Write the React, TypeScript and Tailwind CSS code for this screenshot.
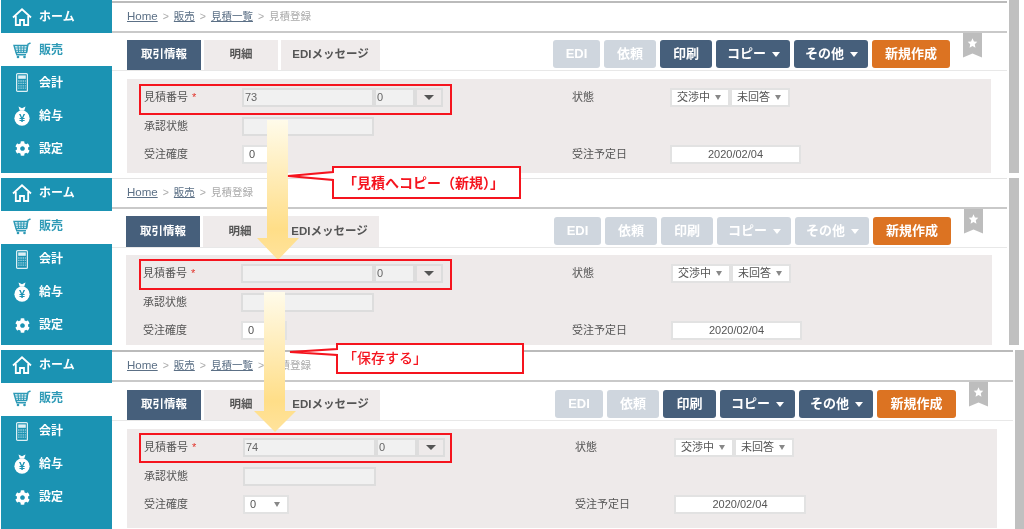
import { FaCog } from "react-icons/fa";

const teal = "text-[#2e9ab6]";

function HomeIcon() {
  return (
    <svg width="20" height="18" viewBox="0 0 20 18" fill="none" stroke="currentColor" strokeWidth="1.8">
      <path d="M1 9.5 10 1.3l9 8.2" />
      <path d="M3.8 8v9h4.2v-5h4v5h4.2V8" />
    </svg>
  );
}

function CartIcon() {
  return (
    <svg width="18" height="18" viewBox="0 0 18 18" fill="none" stroke="currentColor" strokeWidth="1.1">
      <path d="M13.5 11.5 15 3.2 17.5 2" strokeWidth="1.4" />
      <path d="M1 4.5h13.5l-1 7H3z" strokeWidth="1.4" />
      <path d="M1.6 7h12.4M2.4 9.3h11.2M5 4.5l.6 7M8 4.5v7M11 4.5l-.5 7" />
      <path d="M3.2 11.5l.6 2.3h9.2" strokeWidth="1.4" />
      <circle cx="5" cy="16" r="1.3" fill="currentColor" stroke="none" />
      <circle cx="11.5" cy="16" r="1.3" fill="currentColor" stroke="none" />
    </svg>
  );
}

function CalcIcon() {
  return (
    <svg width="12" height="19" viewBox="0 0 12 19" fill="none">
      <rect x="0.6" y="0.6" width="10.8" height="17.8" rx="1" stroke="white" strokeOpacity="0.85" strokeWidth="1.2" />
      <rect x="2.2" y="2.4" width="7.6" height="3.4" fill="white" fillOpacity="0.85" />
      <path d="M2.2 8h7.6M2.2 10.4h7.6M2.2 12.8h7.6M2.2 15.2h7.6" stroke="white" strokeOpacity="0.6" strokeWidth="1.3" strokeDasharray="1.3 .9" />
    </svg>
  );
}

function BagIcon() {
  return (
    <svg width="16" height="20" viewBox="0 0 16 20">
      <path d="M4.5.5 8 2.2 11.5.5l-1.3 4.2H5.8z" fill="white" />
      <circle cx="8" cy="12.2" r="7.6" fill="white" />
      <text x="8" y="16.4" textAnchor="middle" fontSize="11" fontWeight="700" fill="#1b93b3" fontFamily="Liberation Sans">¥</text>
    </svg>
  );
}

function NavItem({ icon, label, pad }: { icon: React.ReactNode; label: string; pad: string }) {
  return (
    <div className={`flex h-[33px] items-center ${pad}`}>
      <span className="ml-[11px] flex w-[20px] justify-center">{icon}</span>
      <span className="ml-[7px] text-[12px] font-bold">{label}</span>
    </div>
  );
}

function Sidebar({ pad, height }: { pad: string; height: string }) {
  return (
    <aside className={`ml-px flex w-[111px] shrink-0 flex-col ${height}`}>
      <div className="bg-[#1b93b3] text-white">
        <NavItem icon={<HomeIcon />} label="ホーム" pad={pad} />
      </div>
      <div className={teal}>
        <NavItem icon={<CartIcon />} label="販売" pad={pad} />
      </div>
      <div className="flex-1 bg-[#1b93b3] text-white">
        <NavItem icon={<CalcIcon />} label="会計" pad={pad} />
        <NavItem icon={<BagIcon />} label="給与" pad={pad} />
        <NavItem icon={<FaCog size={15} />} label="設定" pad={pad} />
      </div>
    </aside>
  );
}

function Crumbs({ items, current }: { items: string[]; current: string }) {
  return (
    <div className="flex items-center text-[10.5px] text-[#aaa]">
      {items.map((item) => (
        <span key={item} className="flex items-center">
          <span className={item === "Home" ? "text-[11.5px] text-[#5c7086] underline" : "text-[#5c7086] underline"}>{item}</span>
          <span className="mx-[5px]">&gt;</span>
        </span>
      ))}
      <span>{current}</span>
    </div>
  );
}

function Tab({ label, active, width }: { label: string; active?: boolean; width: string }) {
  return (
    <div
      className={`flex items-center justify-center text-[11.5px] font-bold ${width} ${
        active ? "bg-[#465f7b] text-white" : "bg-[#efebeb] text-[#555]"
      }`}
    >
      {label}
    </div>
  );
}

function Button({ label, width, off, caret, orange }: { label: string; width: string; off?: boolean; caret?: boolean; orange?: boolean }) {
  const color = orange ? "bg-[#dc7322]" : off ? "bg-[#cfd6de]" : "bg-[#465f7b]";
  return (
    <div
      className={`flex h-[28px] items-center rounded-[3px] text-[13px] font-bold text-white ${
        caret ? "gap-[6px] pl-[11px]" : "justify-center"
      } ${width} ${color}`}
    >
      {label}
      {caret && <span className="h-0 w-0 border-x-[4px] border-t-[5px] border-x-transparent border-t-white" />}
    </div>
  );
}

function Bookmark() {
  return (
    <svg width="19" height="25" viewBox="0 0 20 25" preserveAspectRatio="none" className="shrink-0">
      <path d="M0 0h20v24.5l-10-4-10 4z" fill="#bdbdbd" />
      <path d="M10 5.2l1.5 3.2 3.5.4-2.6 2.4.7 3.5L10 13l-3.1 1.7.7-3.5L5 8.8l3.5-.4z" fill="white" />
    </svg>
  );
}

function Select({ label, width }: { label: string; width: string }) {
  return (
    <div className={`flex h-full items-center justify-between border-2 border-[#e2e2e2] bg-white pl-[5px] pr-[7px] text-[11px] text-[#555] ${width}`}>
      {label}
      <span className="h-0 w-0 border-x-[3.5px] border-t-[5px] border-x-transparent border-t-[#888]" />
    </div>
  );
}

function Row({ label, labelWidth, required, children }: { label: string; labelWidth: string; required?: boolean; children?: React.ReactNode }) {
  return (
    <div className="flex h-[19px] items-center text-[11px] text-[#555]">
      <span className={`shrink-0 ${labelWidth}`}>
        {label}
        {required && <span className="ml-[4px] text-[#e2332b]">*</span>}
      </span>
      {children}
    </div>
  );
}

function ReadOnly({ value, width }: { value?: string; width: string }) {
  return (
    <div className={`flex h-full items-center border-2 border-[#dddddd] bg-[#f1f1f1] pl-[1px] text-[11px] text-[#666] ${width}`}>
      {value}
    </div>
  );
}

type PanelProps = {
  height: string;
  sideHeight: string;
  navPad: string;
  mainWidth: string;
  topLine: string;
  crumbs: string[];
  crumbClass: string;
  tabTop: string;
  tabHeight: string;
  buttonTop: string;
  widths: string[];
  markRight: string;
  formGap: string;
  formClass: string;
  leftCol: string;
  labelWidth: string;
  valueWidth: string;
  rightLabel: string;
  dateWidth: string;
  number: string;
  lockAll?: boolean;
  bar: string;
};

function Panel(p: PanelProps) {
  return (
    <section className={`flex ${p.height}`}>
      <Sidebar pad={p.navPad} height={p.sideHeight} />
      <div className={`shrink-0 ${p.mainWidth}`}>
        <div className={`${p.topLine} flex items-center border-b-2 border-b-[#c9c9c9] ${p.crumbClass}`}>
          <Crumbs items={p.crumbs} current="見積登録" />
        </div>
        <div className={`flex border-b border-[#e8e8e8] ${p.markRight}`}>
          <div className={`flex gap-[3px] ${p.tabTop} ${p.tabHeight}`}>
            <Tab label="取引情報" active width="w-[74px]" />
            <Tab label="明細" width="w-[74px]" />
            <Tab label="EDIメッセージ" width="w-[99px]" />
          </div>
          <div className={`ml-auto flex gap-[4px] ${p.buttonTop}`}>
            <Button label="EDI" off width={p.widths[0]} />
            <Button label="依頼" off width={p.widths[1]} />
            <Button label="印刷" off={p.lockAll} width={p.widths[2]} />
            <Button label="コピー" off={p.lockAll} caret width={p.widths[3]} />
            <Button label="その他" off={p.lockAll} caret width={p.widths[4]} />
            <Button label="新規作成" orange width={p.widths[5]} />
          </div>
          <div className="ml-[13px]">
            <Bookmark />
          </div>
        </div>
        <div className={`flex bg-[#eeeaea] pt-[9px] ${p.formGap} ${p.formClass}`}>
          <div className={`flex shrink-0 flex-col gap-[9.5px] pl-[17px] ${p.leftCol}`}>
            <Row label="見積番号" required labelWidth={p.labelWidth}>
              <ReadOnly value={p.number} width={p.valueWidth} />
              <ReadOnly value="0" width="w-[41px]" />
              <div className="flex h-full w-[28px] items-center justify-center border-2 border-[#dddddd] bg-[#eeeaea]">
                <span className="h-0 w-0 border-x-[5px] border-t-[5px] border-x-transparent border-t-[#555]" />
              </div>
            </Row>
            <Row label="承認状態" labelWidth={p.labelWidth}>
              <ReadOnly width={p.valueWidth} />
            </Row>
            <Row label="受注確度" labelWidth={p.labelWidth}>
              <Select label="0" width="w-[46px]" />
            </Row>
          </div>
          <div className="flex flex-col gap-[9.5px]">
            <Row label="状態" labelWidth={p.rightLabel}>
              <Select label="交渉中" width="w-[60px]" />
              <Select label="未回答" width="w-[60px]" />
            </Row>
            <Row label="" labelWidth={p.rightLabel} />
            <Row label="受注予定日" labelWidth={p.rightLabel}>
              <div className={`flex h-full items-center justify-center border-2 border-[#e2e2e2] bg-white ${p.dateWidth}`}>2020/02/04</div>
            </Row>
          </div>
        </div>
      </div>
      <div className={`bg-[#c0c0c0] ${p.bar}`} />
    </section>
  );
}

function Arrow({ id, className, headY }: { id: string; className: string; headY: number }) {
  return (
    <svg width="42" height="140" viewBox="0 0 42 140" className={`absolute ${className}`}>
      <defs>
        <linearGradient id={id} x1="0" y1="0" x2="0" y2="1">
          <stop offset="0" stopColor="#fffbea" />
          <stop offset="0.78" stopColor="#ffde88" />
          <stop offset="1" stopColor="#ffe39c" />
        </linearGradient>
      </defs>
      <path d={`M10 0h21v${headY}h11L21 140 0 ${headY}h10z`} fill={`url(#${id})`} />
    </svg>
  );
}

function Callout({ outer, shape, text, textClass }: { outer: string; shape: string; text: string; textClass: string }) {
  return (
    <div className={`absolute ${outer}`}>
      <svg width="240" height="36" viewBox="0 0 240 36" className="absolute left-0 top-0">
        <path d={shape} fill="white" stroke="#f5141e" strokeWidth="2" />
      </svg>
      <span className={`absolute whitespace-nowrap text-[14px] text-[#f5141e] ${textClass}`}>{text}</span>
    </div>
  );
}

export default function App() {
  return (
    <div className="relative h-[529px] w-[1024px] overflow-hidden bg-white font-['Liberation_Sans','Noto_Sans_CJK_JP',sans-serif] blur-[0.5px]">
      <Panel
        height="h-[178px]"
        sideHeight="h-[173px]"
        navPad=""
        mainWidth="w-[895px]"
        topLine="mt-px border-t-2 border-t-[#bbbbbb]"
        crumbs={["Home", "販売", "見積一覧"]}
        crumbClass="h-[32px] pl-[15px]"
        tabTop="ml-[15px] mt-[7px]"
        tabHeight="h-[30px]"
        buttonTop="mt-[7px] h-[28px]"
        widths={["w-[47px]", "w-[52px]", "w-[52px]", "w-[74px]", "w-[74px]", "w-[78px]"]}
        markRight="pr-[25px]"
        formGap="mt-[8px]"
        formClass="ml-[15px] mr-[16px] h-[94px]"
        leftCol="w-[445px]"
        labelWidth="w-[98px]"
        valueWidth="w-[132px]"
        rightLabel="w-[98px]"
        dateWidth="w-[131px]"
        number="73"
        bar="ml-[2px] h-[173px] w-[10px]"
      />
      <Panel
        height="h-[172px]"
        sideHeight="h-[167px]"
        navPad="pb-[3px]"
        mainWidth="w-[895px]"
        topLine="border-t border-t-[#e4e4e4]"
        crumbs={["Home", "販売"]}
        crumbClass="h-[31px] pl-[15px]"
        tabTop="ml-[14px] mt-[7px]"
        tabHeight="h-[31px]"
        buttonTop="mt-[8px] h-[28px]"
        widths={["w-[47px]", "w-[52px]", "w-[52px]", "w-[74px]", "w-[74px]", "w-[78px]"]}
        markRight="pr-[24px]"
        formGap="mt-[7px]"
        formClass="ml-[14px] mr-[15px] h-[90px]"
        leftCol="w-[446px]"
        labelWidth="w-[98px]"
        valueWidth="w-[133px]"
        rightLabel="w-[99px]"
        dateWidth="w-[131px]"
        number=""
        lockAll
        bar="ml-[2px] h-[167px] w-[10px]"
      />
      <Panel
        height="h-[179px]"
        sideHeight="h-[179px]"
        navPad="pb-[3px]"
        mainWidth="w-[901px]"
        topLine="border-t-2 border-t-[#bbbbbb]"
        crumbs={["Home", "販売", "見積一覧"]}
        crumbClass="h-[32px] pl-[15px]"
        tabTop="ml-[15px] mt-[8px]"
        tabHeight="h-[30px]"
        buttonTop="mt-[8px] h-[28px]"
        widths={["w-[48px]", "w-[52px]", "w-[53px]", "w-[75px]", "w-[74px]", "w-[79px]"]}
        markRight="pr-[25px]"
        formGap="mt-[8px]"
        formClass="ml-[15px] mr-[16px] h-[99px]"
        leftCol="w-[448px]"
        labelWidth="w-[99px]"
        valueWidth="w-[133px]"
        rightLabel="w-[99px]"
        dateWidth="w-[132px]"
        number="74"
        bar="ml-[2px] h-[179px] w-[9px]"
      />

      {/* annotations drawn over the screenshots */}
      <Arrow id="arrow-a" className="left-[257px] top-[120px]" headY={118} />
      <Arrow id="arrow-b" className="left-[254px] top-[292px]" headY={119} />

      <div className="absolute left-[139px] top-[84px] h-[31px] w-[313px] border-2 border-[#f5141e]" />
      <div className="absolute left-[139px] top-[259px] h-[31px] w-[313px] border-2 border-[#f5141e]" />
      <div className="absolute left-[139px] top-[433px] h-[30px] w-[313px] border-2 border-[#f5141e]" />

      <Callout
        outer="left-[286px] top-[165px] h-[36px] w-[240px]"
        shape="M2 11 47 7V2H234V33H47V15z"
        text="「見積へコピー（新規）」"
        textClass="left-[57px] top-[8px] font-bold"
      />
      <Callout
        outer="left-[288px] top-[342px] h-[36px] w-[240px]"
        shape="M2 10 49 7V2H235V31H49V13z"
        text="「保存する」"
        textClass="left-[55px] top-[6px] font-medium"
      />
    </div>
  );
}
